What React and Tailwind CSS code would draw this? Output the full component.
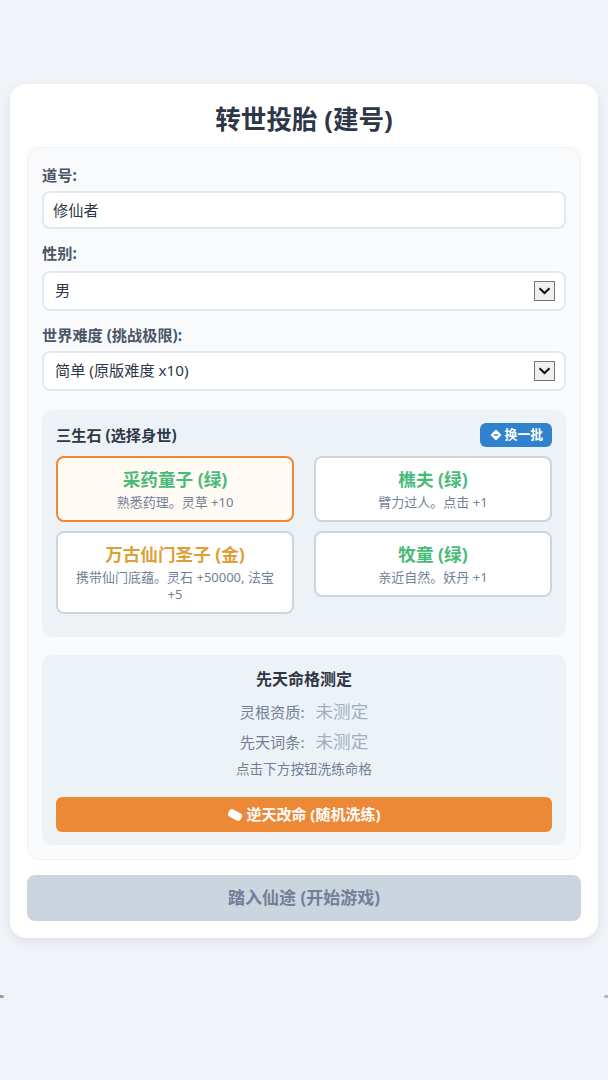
const font = "font-['Noto_Sans','Noto_Sans_CJK_SC',sans-serif]";

const origins = [
  { name: "采药童子 (绿)", desc: "熟悉药理。灵草 +10", color: "text-[#48bb78]", selected: true },
  { name: "樵夫 (绿)", desc: "臂力过人。点击 +1", color: "text-[#48bb78]" },
  { name: "万古仙门圣子 (金)", desc: "携带仙门底蕴。灵石 +50000, 法宝 +5", color: "text-[#dd9f36]" },
  { name: "牧童 (绿)", desc: "亲近自然。妖丹 +1", color: "text-[#48bb78]" },
];

function Field({ label, children }) {
  return (
    <div>
      <label className="mb-[6px] block text-[15.2px] leading-[20px] font-bold text-[#4a5568]">{label}</label>
      {children}
    </div>
  );
}

function SelectBox({ value }) {
  return (
    <div className="relative">
      <select
        defaultValue={value}
        className="block h-[40px] w-full appearance-none rounded-[8px] border-2 border-[#e2e8f0] bg-white px-[11px] pb-[2px] text-[15.2px] text-[#2d3748] outline-none"
      >
        <option>{value}</option>
      </select>
      <span className="pointer-events-none absolute top-[10px] right-[11px] flex h-[20px] w-[21px] items-center justify-center border border-[#767676] bg-[#efefef]">
        <svg width="13" height="8" viewBox="0 0 13 8" fill="none" stroke="#111" strokeWidth="2">
          <path d="M1.5 1.2 6.5 6 11.5 1.2" />
        </svg>
      </span>
    </div>
  );
}

function OriginCard({ item }) {
  return (
    <div
      className={
        item.selected
          ? "rounded-[8px] border-2 border-[#ed8936] bg-[#fffaf3] px-[14px] pt-[8px] pb-[9px] text-center"
          : "rounded-[8px] border-2 border-[#cbd5e0] bg-white px-[14px] pt-[8px] pb-[9px] text-center"
      }
    >
      <div className={"text-[17.6px] leading-[26px] font-bold " + item.color}>{item.name}</div>
      <div className="mt-[2px] text-[13px] leading-[17px] text-[#718096]">{item.desc}</div>
    </div>
  );
}

export default function App() {
  return (
    <div className={"relative min-h-[1080px] bg-[#f0f4f8] px-[10px] pt-[84px] " + font}>
      <div className="rounded-[16px] bg-white px-[17px] pt-[18px] pb-[17px] shadow-[0_4px_12px_rgba(0,0,0,0.08)]">
        <h1 className="mb-[9px] text-center text-[25.6px] leading-[36px] font-bold text-[#2d3748]">转世投胎 (建号)</h1>

        <div className="rounded-[12px] border border-[#edf2f7] bg-[#f9fafb] px-[14px] pt-[17px] pb-[14px]">
          <div className="flex flex-col gap-[14px]">
            <Field label="道号:">
              <input
                defaultValue="修仙者"
                className="block h-[38px] w-full rounded-[8px] border-2 border-[#e2e8f0] bg-white px-[9px] pb-[2px] text-[15.2px] text-[#2d3748] outline-none"
              />
            </Field>
            <Field label="性别:">
              <div className="mt-[8px]">
                <SelectBox value="男" />
              </div>
            </Field>
            <Field label="世界难度 (挑战极限):">
              <SelectBox value="简单 (原版难度 x10)" />
            </Field>
          </div>

          <section className="mt-[19px] rounded-[10px] bg-[#edf2f7] px-[14px] pt-[13px] pb-[23px]">
            <div className="mb-[9px] flex items-center justify-between">
              <h3 className="text-[15.2px] leading-[24px] font-bold text-[#2d3748]">三生石 (选择身世)</h3>
              <button className="flex h-[24px] items-center gap-[3px] rounded-[6px] bg-[#3182ce] pr-[9px] pl-[10px] text-[12.8px] font-bold text-white">
                <svg width="12" height="12" viewBox="0 0 12 12" fill="white">
                  <path d="M6 .4 11.6 6 6 11.6.4 6Z" />
                  <path d="M4 6h4" stroke="#3182ce" strokeWidth="1.4" />
                </svg>
                换一批
              </button>
            </div>
            <div className="grid grid-cols-[238px_238px] items-start justify-between gap-y-[9px]">
              {origins.map((item) => (
                <OriginCard key={item.name} item={item} />
              ))}
            </div>
          </section>

          <section className="mt-[18px] rounded-[10px] bg-[#edf2f7] px-[14px] pt-[13px] pb-[13px] text-center">
            <h3 className="text-[16px] leading-[22px] font-bold text-[#2d3748]">先天命格测定</h3>
            <p className="mt-[11px] h-[22px] text-[15.2px] leading-[22px] text-[#718096]">
              灵根资质: <span className="ml-[7px] text-[17.6px] leading-none text-[#a0aec0]">未测定</span>
            </p>
            <p className="mt-[8px] h-[22px] text-[15.2px] leading-[22px] text-[#718096]">
              先天词条: <span className="ml-[7px] text-[17.6px] leading-none text-[#a0aec0]">未测定</span>
            </p>
            <p className="mt-[7px] text-[13.6px] leading-[18px] text-[#718096]">点击下方按钮洗练命格</p>
            <button className="mt-[19px] flex h-[35px] w-full items-center justify-center gap-[3px] rounded-[6px] bg-[#ed8936] text-[15px] font-bold text-white">
              <svg width="16" height="14" viewBox="0 0 16 14" fill="white">
                <rect x="1" y="3" width="14" height="8" rx="3" transform="rotate(28 8 7)" />
              </svg>
              逆天改命 (随机洗练)
            </button>
          </section>
        </div>

        <button className="mt-[15px] block h-[46px] w-full rounded-[8px] bg-[#cbd5e0] text-[17px] font-bold text-[#718096]">
          踏入仙途 (开始游戏)
        </button>
      </div>

      {/* small dark nicks at the page edges */}
      <span className="absolute top-[995px] left-0 h-[3px] w-[4px] rounded-r-full bg-[#a39a9e]" />
      <span className="absolute top-[995px] right-0 h-[3px] w-[4px] rounded-l-full bg-[#b4b9c0]" />
    </div>
  );
}
